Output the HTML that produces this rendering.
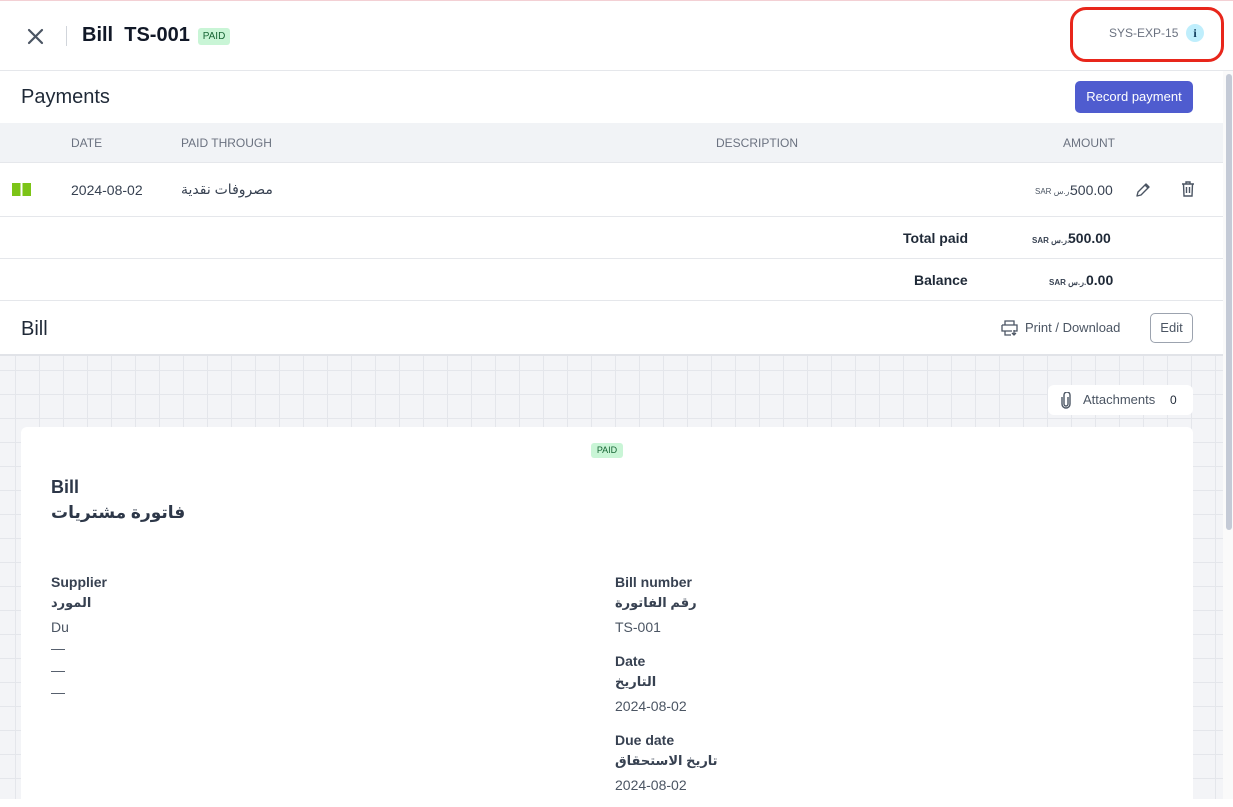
<!DOCTYPE html>
<html><head><meta charset="utf-8">
<style>
*{box-sizing:border-box;margin:0;padding:0}
body{width:1233px;height:799px;overflow:hidden;background:#fff;font-family:"Liberation Sans","Noto Sans CJK SC",sans-serif;color:#1f2937;position:relative}
.a{position:absolute;white-space:nowrap}
.ar{font-family:"Liberation Sans","Noto Sans CJK SC","DejaVu Sans",sans-serif}
.line{position:absolute;left:0;width:1223px;height:1px;background:#e5e7eb}
.grid{position:absolute;left:0;top:355px;width:1223px;height:444px;background-color:#f3f4f7;
background-image:linear-gradient(#e4e6eb 1px,transparent 1px),linear-gradient(90deg,#e4e6eb 1px,transparent 1px);background-size:24px 24px;background-position:15px 15px}
.lbl{font-size:14px;font-weight:bold;color:#374151}
.val{font-size:14px;color:#4b5563}
.cur span{display:inline-block}
</style></head><body>
<div class="a" style="left:0;top:0;width:1233px;height:1px;background:#f3d0d4"></div>
<svg class="a" style="left:27px;top:28px" width="17" height="17" viewBox="0 0 17 17"><path d="M2 2L15 15M15 2L2 15" stroke="#4b5563" stroke-width="2.2" stroke-linecap="round"/></svg>
<div class="a" style="left:66px;top:26px;width:1px;height:20px;background:#d1d5db"></div>
<div class="a" style="left:82px;top:24px;font-size:20px;font-weight:bold;color:#111827">Bill&nbsp; TS-001</div>
<div class="a" style="left:198px;top:28px;width:32px;height:17px;background:#c9f5d6;border-radius:3px;font-size:10px;color:#166534;text-align:center;line-height:17px">PAID</div>
<div class="a" style="left:1109px;top:26px;font-size:12px;color:#6b7280">SYS-EXP-15</div>
<div class="a" style="left:1186px;top:24px;width:18px;height:18px;border-radius:50%;background:#bfeefc;color:#0e3a5a;font-size:12px;font-weight:bold;text-align:center;line-height:18px;font-family:'Liberation Serif',serif">i</div>
<div class="a" style="left:1070px;top:7px;width:154px;height:55px;border:3px solid #e8261b;border-radius:16px"></div>
<div class="a" style="left:0;top:70px;width:1233px;height:1px;background:#e5e7eb"></div>
<div class="a" style="left:1223px;top:71px;width:10px;height:728px;background:#fafafa"></div>
<div class="a" style="left:1226px;top:74px;width:6px;height:456px;background:#c4cad6;border-radius:3px"></div>
<div class="a" style="left:21px;top:86px;font-size:20px;color:#1f2937">Payments</div>
<div class="a" style="left:1075px;top:81px;width:118px;height:32px;background:#4f5ccf;border-radius:5px;color:#fff;font-size:13px;text-align:center;line-height:32px">Record payment</div>
<div class="a" style="left:0;top:123px;width:1223px;height:40px;background:#f1f3f6;border-bottom:1px solid #e5e7eb"></div>
<div class="a" style="left:71px;top:136px;font-size:12px;color:#6b7280">DATE</div>
<div class="a" style="left:181px;top:136px;font-size:12px;color:#6b7280">PAID THROUGH</div>
<div class="a" style="left:716px;top:136px;font-size:12px;color:#6b7280">DESCRIPTION</div>
<div class="a" style="left:1063px;top:136px;font-size:12px;color:#6b7280">AMOUNT</div>
<svg class="a" style="left:12px;top:183px" width="19" height="13" viewBox="0 0 19 13"><path d="M0 0H8.5V13H0ZM10.5 0H19V13H10.5Z" fill="#7cc417"/></svg>
<div class="a" style="left:71px;top:182px;font-size:14px;color:#374151">2024-08-02</div>
<div class="a ar" style="left:181px;top:181px;font-size:14px;color:#374151">مصروفات نقدية</div>
<div class="a cur" style="left:1035px;top:187px;font-size:8px;color:#4b5563"><span>SAR</span> <span>ر.س.</span></div>
<div class="a" style="left:1070px;top:182px;font-size:14px;color:#374151">500.00</div>
<svg class="a" style="left:1135px;top:182px" width="16" height="16" viewBox="0 0 16 16"><path d="M2 14L3 10L11 2L14 5L6 13Z M10 3L13 6" fill="none" stroke="#4b5563" stroke-width="1.4" stroke-linejoin="round"/></svg>
<svg class="a" style="left:1181px;top:181px" width="14" height="16" viewBox="0 0 14 16"><path d="M1 3H13M5 3V1H9V3M2.5 3L3 15H11L11.5 3M5.5 6V12M8.5 6V12" fill="none" stroke="#4b5563" stroke-width="1.4"/></svg>
<div class="line" style="top:216px"></div>
<div class="a" style="left:903px;top:230px;font-size:14px;font-weight:bold;color:#1f2937">Total paid</div>
<div class="a cur" style="left:1032px;top:236px;font-size:8px;font-weight:bold;color:#374151"><span>SAR</span> <span>ر.س.</span></div>
<div class="a" style="left:1068px;top:230px;font-size:14px;font-weight:bold;color:#1f2937">500.00</div>
<div class="line" style="top:258px"></div>
<div class="a" style="left:914px;top:272px;font-size:14px;font-weight:bold;color:#1f2937">Balance</div>
<div class="a cur" style="left:1049px;top:278px;font-size:8px;font-weight:bold;color:#374151"><span>SAR</span> <span>ر.س.</span></div>
<div class="a" style="left:1086px;top:272px;font-size:14px;font-weight:bold;color:#1f2937">0.00</div>
<div class="line" style="top:300px"></div>
<div class="a" style="left:21px;top:318px;font-size:20px;color:#1f2937">Bill</div>
<svg class="a" style="left:1001px;top:320px" width="18" height="16" viewBox="0 0 18 16"><path d="M4 5V1H13V5M1 5H16V11H13M1 5V11H11M4 11V15H10M13 10V15M11 13L13 15L15 13" fill="none" stroke="#4b5563" stroke-width="1.3"/></svg>
<div class="a" style="left:1025px;top:320px;font-size:13px;color:#4b5563">Print / Download</div>
<div class="a" style="left:1150px;top:313px;width:43px;height:30px;border:1px solid #9ca3af;border-radius:5px;font-size:13px;color:#4b5563;text-align:center;line-height:28px">Edit</div>
<div class="grid"></div>
<div class="a" style="left:0;top:354px;width:1223px;height:2px;background:#e1e3e8"></div>
<div class="a" style="left:1048px;top:385px;width:145px;height:30px;background:#fff;border-radius:6px"></div>
<svg class="a" style="left:1060px;top:392px" width="12" height="17" viewBox="0 0 12 17"><path d="M8 5V12A2 2 0 0 1 4 12V3A3 3 0 0 1 10 3V12A4 4 0 0 1 2 12V5" fill="none" stroke="#4b5563" stroke-width="1.4"/></svg>
<div class="a" style="left:1083px;top:392px;font-size:13px;color:#4b5563">Attachments</div>
<div class="a" style="left:1170px;top:393px;font-size:12px;color:#1f2937">0</div>
<div class="a" style="left:21px;top:427px;width:1172px;height:380px;background:#fff;border-radius:6px"></div>
<div class="a" style="left:591px;top:443px;width:32px;height:15px;background:#c9f5d6;border-radius:3px;font-size:9px;color:#166534;text-align:center;line-height:15px">PAID</div>
<div class="a" style="left:51px;top:477px;font-size:18px;font-weight:bold;color:#2d3748">Bill</div>
<div class="a ar" style="left:51px;top:503px;font-size:17px;font-weight:bold;color:#2d3748">فاتورة مشتريات</div>
<div class="a lbl" style="left:51px;top:574px">Supplier</div>
<div class="a lbl ar" style="left:51px;top:595px;font-size:13px">المورد</div>
<div class="a val" style="left:51px;top:619px">Du</div>
<div class="a val" style="left:51px;top:640px">—</div>
<div class="a val" style="left:51px;top:662px">—</div>
<div class="a val" style="left:51px;top:684px">—</div>
<div class="a lbl" style="left:615px;top:574px">Bill number</div>
<div class="a lbl ar" style="left:615px;top:595px;font-size:13px">رقم الفاتورة</div>
<div class="a val" style="left:615px;top:619px">TS-001</div>
<div class="a lbl" style="left:615px;top:653px">Date</div>
<div class="a lbl ar" style="left:615px;top:674px;font-size:13px">التاريخ</div>
<div class="a val" style="left:615px;top:698px">2024-08-02</div>
<div class="a lbl" style="left:615px;top:732px">Due date</div>
<div class="a lbl ar" style="left:615px;top:753px;font-size:13px">تاريخ الاستحقاق</div>
<div class="a val" style="left:615px;top:777px">2024-08-02</div>
</body></html>
